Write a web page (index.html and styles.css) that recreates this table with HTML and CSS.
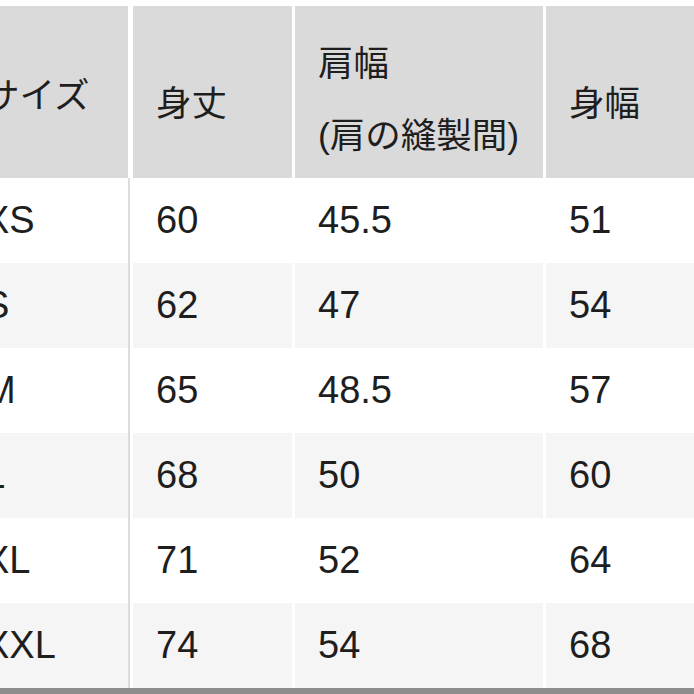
FILE: index.html
```html
<!DOCTYPE html>
<html lang="ja">
<head>
<meta charset="utf-8">
<title>サイズ表</title>
<link rel="stylesheet" href="styles.css">
</head>
<body>
<div class="frame">
  <div class="sheet">
    <div class="cell head first">サイズ</div>
    <div class="cell head">身丈</div>
    <div class="cell head two"><span>肩幅</span><span>(肩の縫製間)</span></div>
    <div class="cell head">身幅</div>

    <div class="cell first">XS</div><div class="cell">60</div><div class="cell">45.5</div><div class="cell">51</div>
    <div class="cell first alt">S</div><div class="cell alt">62</div><div class="cell alt">47</div><div class="cell alt">54</div>
    <div class="cell first">M</div><div class="cell">65</div><div class="cell">48.5</div><div class="cell">57</div>
    <div class="cell first alt">L</div><div class="cell alt">68</div><div class="cell alt">50</div><div class="cell alt">60</div>
    <div class="cell first">XL</div><div class="cell">71</div><div class="cell">52</div><div class="cell">64</div>
    <div class="cell first alt">XXL</div><div class="cell alt">74</div><div class="cell alt">54</div><div class="cell alt">68</div>
  </div>
  <div class="bottom-bar"></div>
</div>
</body>
</html>
```

FILE: styles.css
```css
html, body {
  margin: 0;
  padding: 0;
  background: #ffffff;
}

.frame {
  width: 694px;
  height: 694px;
  overflow: hidden;
  padding-top: 6px;
  box-sizing: border-box;
  display: flex;
  flex-direction: column;
}

.sheet {
  display: grid;
  grid-template-columns: 169px 159px 248px 160px;
  grid-template-rows: 172px repeat(6, 85px);
  column-gap: 3px;
  margin-left: -39px;
  font-family: "Liberation Sans", "Noto Sans CJK JP", sans-serif;
  color: #1e1e1e;
  font-size: 38px;
}

.cell {
  display: flex;
  align-items: center;
  padding-left: 23px;
  box-sizing: border-box;
  background: #ffffff;
  white-space: nowrap;
}

.cell.alt {
  background: #f5f5f5;
}

.cell.first {
  border-right: 2px solid #dcdcdc;
}

.cell.head {
  background: #dadada;
  font-size: 35.5px;
  padding-top: 16px;
}

.cell.head.first {
  padding-top: 0;
  border-right: 2px solid #ffffff;
}

.cell.two {
  flex-direction: column;
  align-items: flex-start;
  justify-content: center;
  line-height: 72px;
}

.bottom-bar {
  height: 6px;
  background: #8d8d8d;
  border-top: 0;
}
```
